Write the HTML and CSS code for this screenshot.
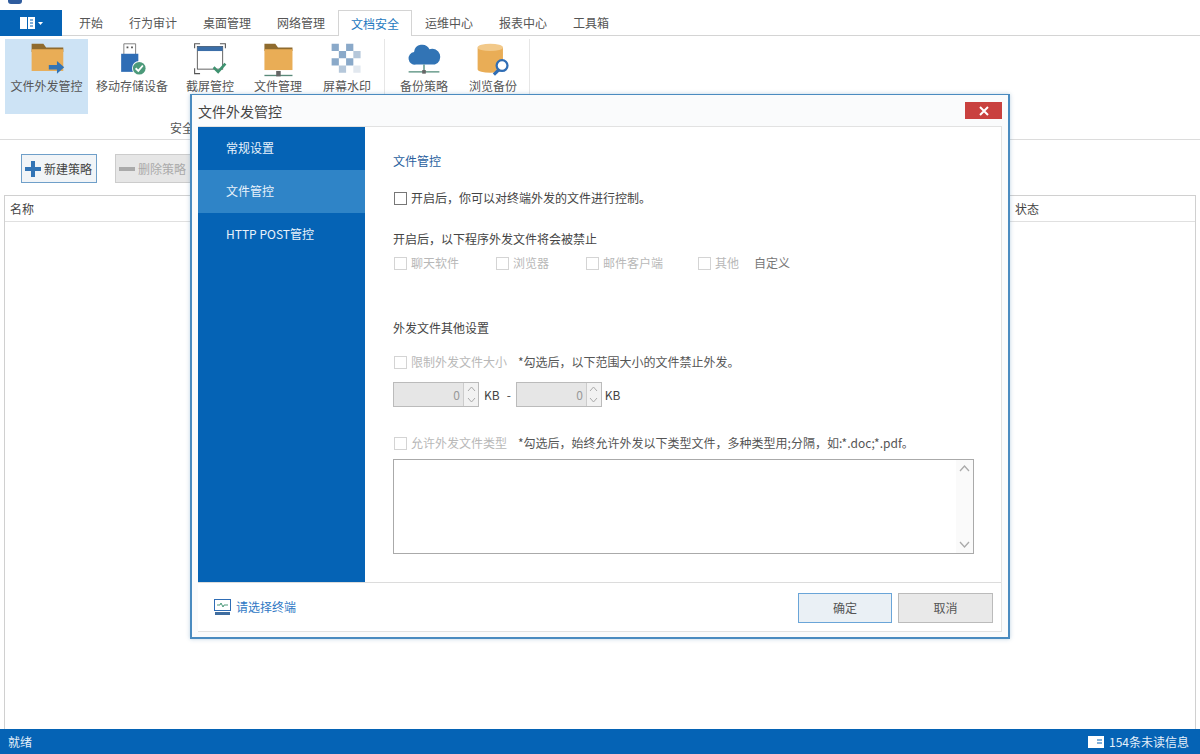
FILE: index.html
```html
<!DOCTYPE html>
<html lang="zh-CN">
<head>
  <meta charset="UTF-8">
  <title>文件外发管控</title>
  <link rel="stylesheet" href="styles.css">
</head>
<body>
  <div class="topstrip"><span class="applogo"></span></div>

  <div class="tabbar">
    <div class="menubtn">
      <svg width="24" height="14" viewBox="0 0 24 14"><rect x="1" y="1" width="7" height="12" fill="#fff"/><rect x="9" y="1" width="7" height="12" fill="#fff"/><path d="M11 4h3M11 7h3M11 10h3" stroke="#0563b5"/><path d="M19 6h5l-2.500 3z" fill="#fff"/></svg>
    </div>
    <div class="tab">开始</div>
    <div class="tab">行为审计</div>
    <div class="tab">桌面管理</div>
    <div class="tab">网络管理</div>
    <div class="tab active">文档安全</div>
    <div class="tab">运维中心</div>
    <div class="tab">报表中心</div>
    <div class="tab">工具箱</div>
  </div>

  <div class="ribbon">
    <div class="group group-safe">
      <div class="items">
        <div class="item w83 selected">
          <svg width="46" height="38" viewBox="0 0 50 42"><path d="M8 2h13l3 4h19v5H8z" fill="#8f6b2e"/><rect x="8" y="8" width="35" height="24" fill="#e9ad56"/><path d="M36 21l8 7-8 7v-4.500h-9v-5h9z" fill="#3274b5"/></svg>
          <span>文件外发管控</span>
        </div>
        <div class="item w88">
          <svg width="46" height="38" viewBox="0 0 50 42"><path d="M16 2h13v12H16z" fill="#fff" stroke="#777"/><path d="M19 5h2v2h-2zM24 5h2v2h-2z" fill="#555"/><path d="M13 13h19v20H13z" fill="#2f6db5"/><circle cx="33" cy="29" r="8" fill="#fff"/><circle cx="33" cy="29" r="7" fill="#4c9a7a"/><path d="M29 29l3 3 5-6" stroke="#fff" stroke-width="2" fill="none"/></svg>
          <span>移动存储设备</span>
        </div>
        <div class="item w68">
          <svg width="46" height="38" viewBox="0 0 50 42"><path d="M8 7V2h6M36 2h6v5M8 29v6h6" stroke="#555" stroke-width="1.200" fill="none"/><rect x="11" y="5" width="28" height="25" fill="#fff" stroke="#555"/><rect x="11" y="5" width="28" height="5" fill="#3b6ea8"/><path d="M29 28l5 5 8-9" stroke="#3f9270" stroke-width="3" fill="none"/></svg>
          <span>截屏管控</span>
        </div>
        <div class="item w68">
          <svg width="46" height="38" viewBox="0 0 50 42"><path d="M10 2h12l3 4h16v4H10z" fill="#8f6b2e"/><rect x="10" y="8" width="31" height="23" fill="#e9ad56"/><path d="M10 37h31" stroke="#5a8a7a" stroke-width="1.500"/><rect x="23" y="32" width="5" height="6" fill="#666"/></svg>
          <span>文件管理</span>
        </div>
        <div class="item w70">
          <svg width="46" height="38" viewBox="0 0 50 42"><path d="M8 2h8v8H8zM24 2h8v8h-8zM16 10h8v8h-8zM8 18h8v8H8zM24 18h8v8h-8z" fill="#8aa9c9"/><path d="M32 10h8v8h-8zM16 26h8v8h-8z" fill="#b5c7da"/><path d="M32 26h8v8h-8z" fill="#e2e8ef"/></svg>
          <span>屏幕水印</span>
        </div>
      </div>
      <div class="grouplabel">安全管控</div>
    </div>
    <div class="group">
      <div class="items">
        <div class="item w68">
          <svg width="46" height="38" viewBox="0 0 50 42"><path d="M16 25a7 7 0 0 1-2-14 9 9 0 0 1 17-3 8 8 0 0 1 6 17z" fill="#3274b5"/><path d="M25 25v7M8 33h34" stroke="#4f8a78" stroke-width="1.500"/><rect x="23" y="31" width="4" height="4" fill="#666"/></svg>
          <span>备份策略</span>
        </div>
        <div class="item w70">
          <svg width="46" height="38" viewBox="0 0 50 42"><path d="M8 6h28v24a14 4 0 0 1-28 0z" fill="#e9ad56"/><ellipse cx="22" cy="6" rx="14" ry="4" fill="#f2c98a"/><circle cx="35" cy="26" r="6" fill="#fff" stroke="#2f6db5" stroke-width="2.500"/><path d="M31 31l-5 5" stroke="#2f6db5" stroke-width="3.500"/></svg>
          <span>浏览备份</span>
        </div>
      </div>
      <div class="grouplabel">备份管理</div>
    </div>
  </div>

  <div class="toolbar">
    <div class="toolbtn primary">
      <svg width="16" height="16" viewBox="0 0 16 16"><path d="M6 0h4v6h6v4h-6v6H6v-6H0V6h6z" fill="#3274b5"/></svg>
      新建策略
    </div>
    <div class="toolbtn off">
      <svg width="16" height="16" viewBox="0 0 16 16"><rect y="6" width="16" height="4" fill="#aaa"/></svg>
      删除策略
    </div>
  </div>

  <div class="grid">
    <div class="gridhead"><span>名称</span><span class="statcol">状态</span></div>
  </div>

  <div class="statusbar">
    <span>就绪</span>
    <span class="unread">
      <svg width="16" height="12" viewBox="0 0 16 12"><rect width="16" height="12" fill="#fff"/><path d="M9 4h5M9 7h5" stroke="#0563b5"/></svg>
      154条未读信息
    </span>
  </div>

  <div class="dialog">
    <div class="dlgtitle">
      <span>文件外发管控</span>
      <div class="closebtn">
        <svg width="10" height="10" viewBox="0 0 10 10"><path d="M1 1l8 8M9 1l-8 8" stroke="#fff" stroke-width="2"/></svg>
      </div>
    </div>
    <div class="dlginner">
      <div class="dlgmain">
        <div class="side">
          <div class="sideitem">常规设置</div>
          <div class="sideitem current">文件管控</div>
          <div class="sideitem">HTTP POST管控</div>
        </div>
        <div class="form">
          <div class="formtitle">文件管控</div>
          <div class="row row-enable"><i class="cb"></i><span>开启后，你可以对终端外发的文件进行控制。</span></div>
          <div class="row row-sub">开启后，以下程序外发文件将会被禁止</div>
          <div class="row row-apps muted">
            <span class="app app1"><i class="cb dis"></i>聊天软件</span>
            <span class="app app2"><i class="cb dis"></i>浏览器</span>
            <span class="app app3"><i class="cb dis"></i>邮件客户端</span>
            <span class="app app4"><i class="cb dis"></i>其他</span>
            <span class="custom">自定义</span>
          </div>
          <div class="row row-other">外发文件其他设置</div>
          <div class="row row-limit">
            <span class="chk muted"><i class="cb dis"></i>限制外发文件大小</span>
            <span class="hint">*勾选后，以下范围大小的文件禁止外发。</span>
          </div>
          <div class="row row-size">
            <div class="spin">
              <span class="val">0</span>
              <span class="arrows">
                <svg width="9" height="6" viewBox="0 0 9 6"><path d="M1 5l3.500-4 3.500 4" stroke="#aaa" fill="none"/></svg>
                <svg width="9" height="6" viewBox="0 0 9 6"><path d="M1 1l3.500 4 3.500-4" stroke="#aaa" fill="none"/></svg>
              </span>
            </div>
            <span class="unit">KB</span><span class="dash">-</span>
            <div class="spin">
              <span class="val">0</span>
              <span class="arrows">
                <svg width="9" height="6" viewBox="0 0 9 6"><path d="M1 5l3.500-4 3.500 4" stroke="#aaa" fill="none"/></svg>
                <svg width="9" height="6" viewBox="0 0 9 6"><path d="M1 1l3.500 4 3.500-4" stroke="#aaa" fill="none"/></svg>
              </span>
            </div>
            <span class="unit2">KB</span>
          </div>
          <div class="row row-allow">
            <span class="chk muted"><i class="cb dis"></i>允许外发文件类型</span>
            <span class="hint">*勾选后，始终允许外发以下类型文件，多种类型用;分隔，如:*.doc;*.pdf。</span>
          </div>
          <div class="typebox">
            <div class="scrollbar">
              <svg width="11" height="7" viewBox="0 0 11 7"><path d="M1 6l4.500-5 4.500 5" stroke="#aaa" stroke-width="1.300" fill="none"/></svg>
              <svg width="11" height="7" viewBox="0 0 11 7"><path d="M1 1l4.500 5 4.500-5" stroke="#aaa" stroke-width="1.300" fill="none"/></svg>
            </div>
          </div>
        </div>
      </div>
      <div class="dlgfoot">
        <div class="terminal">
          <svg width="17" height="16" viewBox="0 0 17 16"><rect x="0.500" y="0.500" width="16" height="11" fill="#fff" stroke="#2f6db5"/><path d="M3 6h3l1-2 2 4 1-2h4" stroke="#4c9a7a" fill="none"/><rect x="1" y="13" width="15" height="3" fill="#3f6d9f"/></svg>
          <span>请选择终端</span>
        </div>
        <div class="dlgbtns">
          <div class="btn ok">确定</div>
          <div class="btn">取消</div>
        </div>
      </div>
    </div>
  </div>
</body>
</html>
```

FILE: styles.css
```css
* {
  box-sizing: border-box;
}
html, body {
  height: 100%;
}
body {
  margin: 0;
  height: 754px;
  overflow: hidden;
  display: flex;
  flex-direction: column;
  background: #fff;
  color: #444;
  font-family: "Noto Sans CJK SC", "Liberation Sans", sans-serif;
  font-size: 12px;
  line-height: 16px;
}
.topstrip {
  height: 10px;
  padding-left: 8px;
}
.applogo {
  display: block;
  width: 14px;
  height: 4px;
  background: #2f5c9e;
  border-radius: 0 0 3px 3px;
}

/* tabs */
.tabbar {
  height: 26px;
  display: flex;
  border-bottom: 1px solid #d4d4d4;
}
.menubtn {
  width: 62px;
  height: 26px;
  margin-right: 4px;
  background: #0563b5;
  display: flex;
  align-items: center;
  justify-content: center;
}
.tab {
  padding: 0 13px;
  height: 26px;
  line-height: 26px;
  color: #555;
}
.tab.active {
  color: #2478c0;
  background: #fff;
  border: 1px solid #d4d4d4;
  border-bottom: none;
  padding: 0 12px;
  line-height: 25px;
}

/* ribbon */
.ribbon {
  height: 104px;
  display: flex;
  padding: 3px 0 0 5px;
  border-bottom: 1px solid #dcdcdc;
}
.group {
  border-right: 1px solid #e6e6e6;
  padding-right: 1px;
}
.group-safe {
  width: 380px;
  margin-right: 5px;
}
.items {
  display: flex;
  height: 75px;
}
.item {
  height: 75px;
  display: flex;
  flex-direction: column;
  align-items: center;
  padding-top: 3px;
  color: #555;
  white-space: nowrap;
}
.item span {
  margin-top: -2px;
}
.item.selected {
  background: #cde3f5;
}
.w83 { width: 83px; }
.w88 { width: 88px; }
.w68 { width: 68px; }
.w70 { width: 70px; }
.grouplabel {
  text-align: center;
  margin-top: 6px;
  color: #555;
}

/* toolbar */
.toolbar {
  height: 55px;
  display: flex;
  gap: 18px;
  padding: 14px 0 0 21px;
}
.toolbtn {
  width: 76px;
  height: 29px;
  display: flex;
  align-items: center;
  gap: 3px;
  padding-left: 3px;
  color: #444;
  background: #f1f4f7;
  border: 1px solid #6f9fc9;
}
.toolbtn.off {
  color: #aaa;
  background: #e6e6e6;
  border-color: #ccc;
  width: 90px;
}

/* list */
.grid {
  flex: 1;
  margin: 0 4px;
  border: 1px solid #d0d0d0;
  border-bottom: none;
}
.gridhead {
  height: 26px;
  display: flex;
  align-items: center;
  justify-content: space-between;
  padding: 0 0 0 5px;
  border-bottom: 1px solid #e0e0e0;
}
.statcol {
  width: 180px;
}
.statusbar {
  height: 25px;
  display: flex;
  align-items: center;
  justify-content: space-between;
  padding: 0 11px 0 8px;
  background: #0563b5;
  color: #e6f0fa;
}
.unread {
  display: flex;
  align-items: center;
  gap: 5px;
}

/* dialog */
.dialog {
  position: absolute;
  left: 190px;
  top: 94px;
  width: 820px;
  height: 545px;
  padding: 0 6px 5px 6px;
  display: flex;
  flex-direction: column;
  background: #fafbfc;
  border: 2px solid #4a8bc0;
  border-width: 1px 2px 2px 2px;
  box-shadow: 0 0 4px rgba(60, 120, 170, 0.35);
}
.dlgtitle {
  height: 31px;
  flex: none;
  display: flex;
  align-items: center;
  justify-content: space-between;
  font-size: 14px;
  color: #444;
}
.closebtn {
  width: 37px;
  height: 17px;
  background: #c9413f;
  display: flex;
  align-items: center;
  justify-content: center;
}
.dlginner {
  flex: 1;
  display: flex;
  flex-direction: column;
  background: #fff;
  border: 1px solid #e2e2e2;
  border-left: none;
}
.dlgmain {
  flex: 1;
  display: flex;
  border-bottom: 1px solid #dcdcdc;
}
.side {
  width: 167px;
  flex: none;
  background: #0563b5;
  color: #e8f2fb;
}
.sideitem {
  height: 43px;
  line-height: 42px;
  padding-left: 28px;
}
.sideitem.current {
  background: #2f84c7;
}
.form {
  flex: 1;
  padding: 26px 28px 0 28px;
}
.formtitle {
  color: #2a5f9e;
}
.row {
  display: flex;
  align-items: center;
  height: 16px;
  white-space: nowrap;
}
.cb {
  display: inline-block;
  flex: none;
  width: 13px;
  height: 13px;
  margin: 0 4px 0 1px;
  border: 1px solid #777;
  background: #fff;
}
.cb.dis {
  border-color: #d4d4d4;
}
.muted {
  color: #b8b8b8;
}
.row-enable { margin-top: 21px; }
.row-sub { margin-top: 25px; }
.row-apps { margin-top: 8px; }
.row-other { margin-top: 49px; }
.row-limit { margin-top: 18px; }
.row-size { margin-top: 12px; height: 25px; }
.row-allow { margin-top: 28px; }
.app {
  display: flex;
  align-items: center;
}
.app1 { width: 102px; }
.app2 { width: 90px; }
.app3 { width: 112px; }
.app4 { width: 57px; }
.custom { color: #777; }
.chk {
  display: flex;
  align-items: center;
  width: 125px;
}
.hint {
  color: #555;
}
.spin {
  width: 86px;
  height: 25px;
  display: flex;
  background: #e6e6e6;
  border: 1px solid #bbb;
  color: #999;
}
.val {
  flex: 1;
  text-align: right;
  padding-right: 3px;
  line-height: 23px;
}
.arrows {
  width: 15px;
  background: #f2f2f2;
  border-left: 1px solid #ccc;
  display: flex;
  flex-direction: column;
  align-items: center;
  justify-content: space-around;
}
.unit { margin: 0 7px 0 5px; }
.dash { margin-right: 5px; }
.unit2 { margin-left: 3px; }
.typebox {
  margin-top: 8px;
  height: 95px;
  display: flex;
  justify-content: flex-end;
  border: 1px solid #aaa;
  width: 581px;
}
.scrollbar {
  width: 17px;
  display: flex;
  flex-direction: column;
  align-items: center;
  justify-content: space-between;
  padding: 5px 0;
  background: #fafafa;
}
.dlgfoot {
  height: 48px;
  flex: none;
  display: flex;
  align-items: center;
  justify-content: space-between;
  padding: 2px 8px 0 16px;
}
.terminal {
  display: flex;
  align-items: center;
  gap: 5px;
  margin-top: -2px;
  color: #2f78c4;
}
.dlgbtns {
  display: flex;
  gap: 6px;
}
.btn {
  width: 95px;
  height: 30px;
  line-height: 28px;
  text-align: center;
  color: #555;
  background: #e9e9e9;
  border: 1px solid #bbb;
}
.btn.ok {
  width: 94px;
  background: #eaf0f5;
  border-color: #6aa5d8;
}
```
